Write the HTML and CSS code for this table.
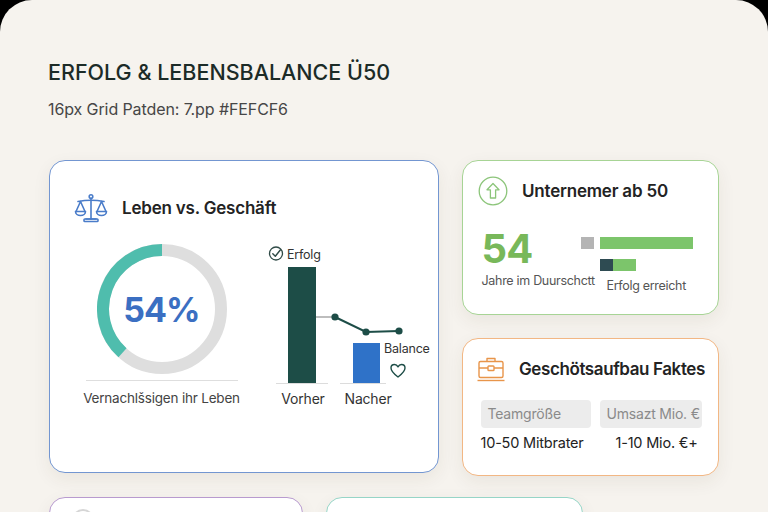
FILE: index.html
```html
<!DOCTYPE html>
<html lang="de">
<head>
<meta charset="utf-8">
<title>Erfolg &amp; Lebensbalance Ü50</title>
<link rel="stylesheet" href="styles.css">
</head>
<body>
<div class="page">
  <header class="head">
    <h1 class="title">ERFOLG &amp; LEBENSBALANCE Ü50</h1>
    <p class="subtitle">16px Grid Patden: 7.pp #FEFCF6</p>
  </header>

  <div class="row row-top">
    <section class="card card-blue card-balance">
      <div class="card-head">
        <svg class="icon" width="34" height="30" viewBox="0 0 34 30" fill="none" stroke="#4a7cc9" stroke-width="1.6" stroke-linecap="round" stroke-linejoin="round">
          <circle cx="17" cy="3.5" r="1.8"/>
          <path d="M17 5.5V26"/>
          <path d="M4 8.5Q17 6 30 8.5"/>
          <path d="M6.5 8.5L2 18.5M6.5 8.5L11 18.5"/>
          <path d="M1.5 18.5H11.5A5 4 0 0 1 1.5 18.5Z"/>
          <path d="M27.5 8.5L23 18.5M27.5 8.5L32 18.5"/>
          <path d="M22.5 18.5H32.5A5 4 0 0 1 22.5 18.5Z"/>
          <path d="M12 26H22"/>
          <rect x="10" y="26" width="14" height="2.5" rx="0.8"/>
        </svg>
        <h2 class="card-title">Leben vs. Geschäft</h2>
      </div>
      <div class="balance-body">
        <div class="donut-col">
          <div class="donut">
            <svg width="130" height="130" viewBox="0 0 130 130">
              <circle cx="65" cy="65" r="59" fill="none" stroke="#dedede" stroke-width="12"/>
              <path d="M65 6A59 59 0 0 0 25.5 108.8" fill="none" stroke="#4fbdad" stroke-width="12"/>
            </svg>
            <span class="donut-value">54%</span>
          </div>
          <div class="donut-rule"></div>
          <p class="donut-label">Vernachlšsigen ihr Leben</p>
        </div>
        <svg class="bars" width="170" height="170" viewBox="0 0 170 170">
          <circle cx="14" cy="13.5" r="6.5" fill="none" stroke="#2f4a46" stroke-width="1.3"/>
          <path d="M10.8 13.8L13.3 16.3L18.5 9.8" fill="none" stroke="#2f4a46" stroke-width="1.4" stroke-linecap="round" stroke-linejoin="round"/>
          <text x="25" y="18.5" class="chart-text">Erfolg</text>
          <rect x="26" y="27" width="28" height="116" fill="#1d4d47"/>
          <line x1="14" y1="143.5" x2="66" y2="143.5" stroke="#dcdcdc" stroke-width="1"/>
          <rect x="91" y="103" width="27" height="40" fill="#2f72c8"/>
          <line x1="78" y1="143.5" x2="124" y2="143.5" stroke="#dcdcdc" stroke-width="1"/>
          <line x1="54" y1="77" x2="73" y2="77" stroke="#9a9a9a" stroke-width="1.3"/>
          <polyline points="73,77 104,92 137,91" fill="none" stroke="#1d4d47" stroke-width="2"/>
          <circle cx="73" cy="77" r="3.6" fill="#1d4d47"/>
          <circle cx="104" cy="92" r="3.6" fill="#1d4d47"/>
          <circle cx="137" cy="91" r="3.6" fill="#1d4d47"/>
          <text x="122" y="112.5" class="chart-text">Balance</text>
          <path d="M136 137C131 133.2 129 130.6 129 128C129 126 130.5 124.5 132.5 124.5C134 124.5 135.3 125.5 136 126.8C136.7 125.5 138 124.5 139.5 124.5C141.5 124.5 143 126 143 128C143 130.6 141 133.2 136 137Z" fill="none" stroke="#1d4d47" stroke-width="1.4" stroke-linejoin="round"/>
          <text x="41" y="163.5" class="axis-text" text-anchor="middle">Vorher</text>
          <text x="106" y="163.5" class="axis-text" text-anchor="middle">Nacher</text>
        </svg>
      </div>
    </section>

    <div class="side-col">
      <section class="card card-green card-age">
        <div class="card-head">
          <svg class="icon" width="30" height="30" viewBox="0 0 30 30" fill="none" stroke="#8cc57a" stroke-width="1.3" stroke-linejoin="round">
            <circle cx="15" cy="15" r="13.8"/>
            <path d="M15 7.5L21 13.8H17.6V22H12.4V13.8H9Z"/>
          </svg>
          <h2 class="card-title">Unternemer ab 50</h2>
        </div>
        <div class="age-body">
          <div class="age-left">
            <div class="age-num">54</div>
            <div class="age-label">Jahre im Duurschctt</div>
          </div>
          <div class="age-right">
            <div class="hbar-row">
              <span class="hb hb-gray"></span>
              <span class="hb hb-long"></span>
            </div>
            <div class="hbar-row hbar-row2">
              <span class="hb hb-dark"></span>
              <span class="hb hb-short"></span>
            </div>
            <div class="age-caption">Erfolg erreicht</div>
          </div>
        </div>
      </section>

      <section class="card card-orange card-facts">
        <div class="card-head">
          <svg class="icon" width="28" height="26" viewBox="0 0 28 26" fill="none" stroke="#e8954a" stroke-width="1.4" stroke-linejoin="round">
            <path d="M10 5.5V2.5H18V5.5"/>
            <rect x="2" y="5.5" width="24" height="16" rx="1.5"/>
            <path d="M2 12H11M17 12H26"/>
            <rect x="11" y="10" width="6" height="4.5" rx="0.8"/>
            <path d="M0.5 24.5H27.5"/>
          </svg>
          <h2 class="card-title card-title-tight">Geschötsaufbau Faktes</h2>
        </div>
        <div class="facts-grid">
          <div class="fact-label">Teamgröße</div>
          <div class="fact-label">Umsazt Mio. €</div>
          <div class="fact-value">10-50 Mitbrater</div>
          <div class="fact-value fact-value2">1-10 Mio. €+</div>
        </div>
      </section>
    </div>
  </div>

  <div class="row row-bottom">
    <section class="card card-purple card-lower">
      <span class="lower-icon"></span>
    </section>
    <section class="card card-teal card-lower card-lower2"></section>
  </div>
</div>
</body>
</html>
```

FILE: styles.css
```css
* {
  box-sizing: border-box;
  margin: 0;
  padding: 0;
}

html,
body {
  background: #000;
}

body {
  width: 768px;
  height: 512px;
  overflow: hidden;
  font-family: Inter, "Liberation Sans", sans-serif;
  color: #222;
}

.page {
  width: 768px;
  height: 512px;
  background: #f6f3ee;
  border-radius: 32px 32px 0 0;
  padding: 58px 0 0 48px;
  overflow: hidden;
}

.title {
  font-size: 21.5px;
  font-weight: 500;
  line-height: 28px;
  color: #1c2b27;
  letter-spacing: 0;
}

.subtitle {
  margin-top: 13px;
  font-size: 16px;
  line-height: 20px;
  color: #464646;
  letter-spacing: -0.1px;
}

.row {
  display: flex;
  gap: 23px;
  margin-left: 1px;
}

.row-top {
  margin-top: 41px;
}

.card {
  background: #fff;
  border: 1.5px solid #ccc;
  border-radius: 16px;
  box-shadow: 0 6px 18px rgba(70, 55, 30, 0.07);
}

.card-blue { border-color: #7396d1; }
.card-green { border-color: #a7d495; }
.card-orange { border-color: #f2b784; }
.card-purple { border-color: #b89bcf; }
.card-teal { border-color: #96d5c7; }

.card-head {
  display: flex;
  align-items: center;
  gap: 14px;
}

.icon {
  display: block;
  flex-shrink: 0;
}

.card-title {
  font-size: 17px;
  font-weight: 600;
  color: #232323;
  letter-spacing: -0.2px;
  white-space: nowrap;
}

.card-title-tight {
  letter-spacing: -0.4px;
}

/* left card */
.card-balance {
  width: 390px;
  height: 313px;
  padding: 32px 0 0 24px;
}

.card-balance .card-head {
  height: 30px;
}

.balance-body {
  display: flex;
  align-items: flex-start;
  margin-top: 18px;
}

.donut-col {
  width: 160px;
  margin-left: 7.5px;
  display: flex;
  flex-direction: column;
  align-items: center;
}

.donut {
  position: relative;
  width: 130px;
  height: 130px;
  margin-top: 3px;
}

.donut svg {
  display: block;
}

.donut-value {
  position: absolute;
  inset: 0;
  display: flex;
  align-items: center;
  justify-content: center;
  font-size: 34px;
  font-weight: 700;
  color: #3b6fc2;
  letter-spacing: -1px;
}

.donut-rule {
  width: 152px;
  height: 1px;
  background: #dedede;
  margin-top: 6px;
}

.donut-label {
  margin-top: 8px;
  font-size: 13.5px;
  line-height: 18px;
  color: #444;
  white-space: nowrap;
  letter-spacing: -0.2px;
}

.bars {
  display: block;
  margin-left: 20px;
  margin-top: -1px;
  overflow: visible;
}

.chart-text {
  font-family: Inter, "Liberation Sans", sans-serif;
  font-size: 12.5px;
  fill: #333;
  letter-spacing: -0.2px;
}

.axis-text {
  font-family: Inter, "Liberation Sans", sans-serif;
  font-size: 14px;
  fill: #333;
  letter-spacing: -0.2px;
}

/* side column */
.side-col {
  width: 257px;
  display: flex;
  flex-direction: column;
  gap: 23px;
}

.card-age {
  height: 155px;
  padding: 15px 16px 0 15px;
}

.card-age .card-head {
  height: 30px;
}

.age-body {
  display: flex;
  align-items: flex-start;
  margin-top: 22px;
}

.age-left {
  width: 99px;
  margin-left: 3.5px;
  flex-shrink: 0;
}

.age-num {
  font-size: 40px;
  font-weight: 700;
  line-height: 42px;
  color: #78b85a;
  letter-spacing: -0.8px;
}

.age-label {
  margin-top: 3px;
  font-size: 12.5px;
  line-height: 16px;
  color: #555;
  white-space: nowrap;
  letter-spacing: -0.3px;
}

.age-right {
  margin-top: 8.5px;
}

.hbar-row {
  display: flex;
  gap: 6px;
  height: 12px;
}

.hbar-row2 {
  margin-top: 10px;
  padding-left: 19px;
  gap: 0;
}

.hb {
  display: block;
  height: 12px;
}

.hb-gray { width: 13px; background: #b4b4b4; }
.hb-long { width: 93px; background: #7cc56b; }
.hb-dark { width: 13px; background: #2e4b52; }
.hb-short { width: 23px; background: #7cc56b; }

.age-caption {
  margin-top: 7px;
  padding-left: 26px;
  font-size: 12.5px;
  line-height: 16px;
  color: #555;
  white-space: nowrap;
  letter-spacing: -0.3px;
}

.card-facts {
  height: 138px;
  padding: 17px 14px 0 14px;
}

.card-facts .card-head {
  height: 26px;
}

.facts-grid {
  display: grid;
  grid-template-columns: 110px 102px;
  column-gap: 9px;
  row-gap: 6px;
  margin-top: 17.5px;
  margin-left: 3.5px;
}

.fact-label {
  height: 28px;
  line-height: 28px;
  background: #ececec;
  border-radius: 4px;
  padding-left: 7px;
  font-size: 14px;
  color: #8a8a8a;
  white-space: nowrap;
  letter-spacing: -0.2px;
}

.fact-value {
  font-size: 14.5px;
  line-height: 18px;
  color: #222;
  white-space: nowrap;
  letter-spacing: -0.2px;
}

.fact-value2 {
  padding-left: 16px;
}

/* bottom row */
.row-bottom {
  margin-top: 21px;
}

.card-lower {
  width: 254px;
  height: 110px;
  padding: 11px 0 0 22px;
}

.card-lower2 {
  width: 257px;
}

.lower-icon {
  display: block;
  width: 22px;
  height: 22px;
  border: 2px solid #d6d6d6;
  border-radius: 50%;
}
```
